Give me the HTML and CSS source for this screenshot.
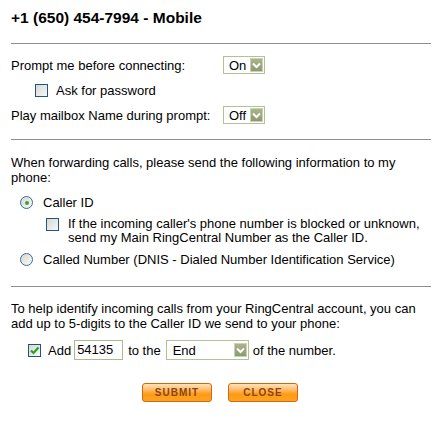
FILE: index.html
```html
<!DOCTYPE html>
<html>
<head>
<meta charset="utf-8">
<link rel="stylesheet" href="styles.css">
</head>
<body>
<div class="page">
  <h1 class="title">+1 (650) 454-7994 - Mobile</h1>
  <hr class="rule">

  <div class="settings">
    <div class="row">
      <span class="label">Prompt me before connecting:</span>
      <span class="select sel-small"><span class="val">On</span><span class="arrow"><svg width="9" height="7" viewBox="0 0 9 7"><path d="M1 1.5 L4.5 5 L8 1.5" fill="none" stroke="#fff" stroke-width="2"/></svg></span></span>
    </div>
    <div class="row row-pass">
      <span class="cb"></span><span>Ask for password</span>
    </div>
    <div class="row">
      <span class="label">Play mailbox Name during prompt:</span>
      <span class="select sel-small"><span class="val">Off</span><span class="arrow"><svg width="9" height="7" viewBox="0 0 9 7"><path d="M1 1.5 L4.5 5 L8 1.5" fill="none" stroke="#fff" stroke-width="2"/></svg></span></span>
    </div>
  </div>
  <hr class="rule rule-2">

  <p class="para">When forwarding calls, please send the following information to my<br>phone:</p>
  <div class="opt opt-caller">
    <span class="radio checked"></span><span>Caller ID</span>
  </div>
  <div class="sub">
    <span class="cb"></span>
    <p class="sub-text">If the incoming caller's phone number is blocked or unknown,<br>send my Main RingCentral Number as the Caller ID.</p>
  </div>
  <div class="opt opt-called">
    <span class="radio"></span><span>Called Number (DNIS - Dialed Number Identification Service)</span>
  </div>
  <hr class="rule rule-3">

  <p class="para para-3">To help identify incoming calls from your RingCentral account, you can<br>add up to 5-digits to the Caller ID we send to your phone:</p>
  <div class="add-row">
    <span class="cb cb-on"><svg width="11" height="11" viewBox="0 0 11 11"><path d="M2 5.5 L4.5 8 L9.5 2.5" fill="none" stroke="#22a322" stroke-width="2.2"/></svg></span>
    <span class="add-label">Add</span>
    <span class="input">54135</span>
    <span class="to">to the</span>
    <span class="select sel-end"><span class="val">End</span><span class="arrow"><svg width="9" height="7" viewBox="0 0 9 7"><path d="M1 1.5 L4.5 5 L8 1.5" fill="none" stroke="#fff" stroke-width="2"/></svg></span></span>
    <span class="of">of the number.</span>
  </div>
  <div class="buttons">
    <span class="btn">SUBMIT</span>
    <span class="btn">CLOSE</span>
  </div>
</div>
</body>
</html>
```

FILE: styles.css
```css
body {
  margin: 0;
  background: #fff;
  color: #000;
  font-family: "Liberation Sans", Arial, sans-serif;
  font-size: 13px;
}

.page {
  padding: 0 2px 0 11px;
}

.title {
  margin: 0;
  padding-top: 8px;
  font-size: 15.5px;
  font-weight: bold;
  line-height: 20px;
}

.rule {
  margin: 15px 0 0;
  height: 0;
  border: 0;
  border-top: 1px solid #8e8e8e;
}

.rule-2 { margin-top: 15px; }
.rule-3 { margin-top: 19px; }

.settings {
  padding-top: 12px;
}

.row {
  display: flex;
  align-items: center;
  height: 18px;
  margin-top: 7px;
}

.row:first-child { margin-top: 0; }

.label { width: 212px; }

.row-pass {
  padding-left: 24px;
  gap: 8px;
}

.select {
  display: flex;
  align-items: center;
  justify-content: space-between;
  box-sizing: border-box;
  height: 18px;
  border: 1px solid #b2c296;
  background: #fff;
  padding: 0 1px 0 5px;
}

.sel-small { width: 42px; }
.sel-end { width: 83px; height: 20px; padding-left: 6px; }

.arrow {
  display: flex;
  align-items: center;
  justify-content: center;
  width: 13px;
  height: 14px;
  box-sizing: border-box;
  border: 1px solid #c9d1b6;
  background: linear-gradient(#aab58a, #8d9970);
}

.cb {
  display: inline-flex;
  align-items: center;
  justify-content: center;
  box-sizing: border-box;
  width: 13px;
  height: 13px;
  flex: none;
  border: 1px solid #1d5585;
  background: linear-gradient(135deg, #d9d9d3, #f7f7f4);
}

.radio {
  position: relative;
  display: inline-block;
  box-sizing: border-box;
  width: 13px;
  height: 13px;
  flex: none;
  border: 1px solid #3d6a98;
  border-radius: 50%;
  background: linear-gradient(135deg, #d6d6d0, #fafaf8);
}

.radio.checked::after {
  content: "";
  position: absolute;
  left: 3.5px;
  top: 3.5px;
  width: 4px;
  height: 4px;
  border-radius: 50%;
  background: #3aa43a;
}

.para {
  margin: 15px 0 0;
  line-height: 15px;
}

.para-3 { margin-top: 14px; }

.opt {
  display: flex;
  align-items: center;
  gap: 10px;
  padding-left: 9px;
  line-height: 15px;
}

.opt-caller { margin-top: 10px; }
.opt-called { margin-top: 7px; }

.sub {
  display: flex;
  align-items: flex-start;
  gap: 9px;
  padding-left: 35px;
  margin-top: 8px;
}

.sub-text {
  margin: 0;
  line-height: 14px;
  margin-top: -1px;
}

.add-row {
  display: flex;
  align-items: center;
  height: 20px;
  margin-top: 9px;
  padding-left: 17px;
}

.add-label { margin-left: 7px; }

.input {
  box-sizing: border-box;
  width: 49px;
  height: 20px;
  margin-left: 3px;
  padding-left: 2px;
  border: 1px solid #a9bb8c;
  line-height: 18px;
}

.to { margin-left: 5px; margin-right: 5px; }

.of { margin-left: 4px; }

.buttons {
  display: flex;
  gap: 16px;
  margin-top: 23px;
  padding-left: 131px;
}

.btn {
  display: flex;
  align-items: center;
  justify-content: center;
  box-sizing: border-box;
  width: 70px;
  height: 19px;
  border: 1px solid #d0680e;
  border-radius: 3px;
  background: linear-gradient(#ffe3bd 0%, #ffb45a 40%, #ff9a12 60%, #ffa426 100%);
  color: #8a4512;
  font-size: 10px;
  font-weight: bold;
  letter-spacing: 1px;
}
```
